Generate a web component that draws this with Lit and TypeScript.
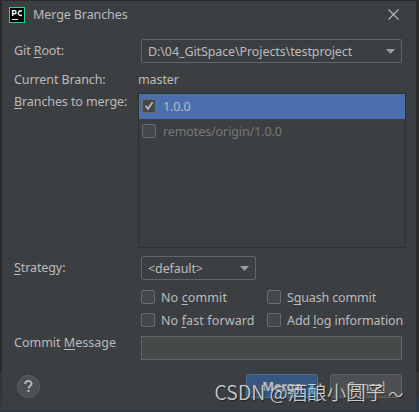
import { LitElement, html, css, svg } from "lit";
import { customElement, property } from "lit/decorators.js";
import { classMap } from "lit/directives/class-map.js";

@customElement("check-box")
class CheckBox extends LitElement {
  @property({ type: Boolean }) checked = false;

  static styles = css`
    :host { display: block; width: 14px; height: 14px; flex: none; }
    .box {
      box-sizing: border-box;
      width: 14px;
      height: 14px;
      border: 1px solid #6b6b6b;
      border-radius: 2px;
      background: #43494a;
    }
    svg { display: block; width: 12px; height: 12px; }
  `;

  render() {
    return html`<div class="box">
      ${this.checked
        ? html`<svg viewBox="0 0 12 12">${svg`<path d="M2.6 5.9 L5 8.8 L9.6 2.2" fill="none" stroke="#b0b0b0" stroke-width="2"/>`}</svg>`
        : null}
    </div>`;
  }
}

@customElement("combo-box")
class ComboBox extends LitElement {
  static styles = css`
    :host {
      display: flex;
      box-sizing: border-box;
      height: 24px;
      align-items: center;
      justify-content: space-between;
      border: 1px solid #646464;
      border-radius: 2px;
      padding: 0 6px;
      background: #3c3f41;
    }
    svg { display: block; width: 9px; height: 5px; }
  `;

  render() {
    return html`<slot></slot><svg viewBox="0 0 9 5"><path d="M0 0H9L4.5 5Z" fill="#9a9da0" /></svg>`;
  }
}

@customElement("app-root")
class AppRoot extends LitElement {
  private branches = [
    { name: "1.0.0", selected: true },
    { name: "remotes/origin/1.0.0", selected: false },
  ];

  static styles = css`
    :host {
      display: block;
      box-sizing: border-box;
      width: 419px;
      height: 412px;
      padding: 1px 3px 2px 2px;
      overflow: hidden;
      position: relative;
      background: linear-gradient(#292a2b 0 372px, #323436 372px 397px, #2d3947 397px);
      font: 12.5px/18px "Noto Sans", "Open Sans", sans-serif;
      letter-spacing: -0.1px;
      color: #bbbbbb;
      white-space: nowrap;
    }
    .dialog {
      box-sizing: border-box;
      height: 409px;
      background: #3c3f41;
      padding: 0 12px;
      display: flex;
      flex-direction: column;
    }
    .title { display: flex; height: 27px; align-items: center; margin: 0 5px 0 -5px; }
    .logo { width: 16px; height: 16px; display: block; margin: 1px 8px 0 0; }
    .title span { flex: 1; }
    .close { width: 11px; height: 11px; display: block; }
    .row { display: grid; grid-template-columns: 124px 1fr; }
    .root { margin-top: 11px; height: 24px; }
    .root combo-box, .message .field { margin: 0 2px 0 3px; }
    .root > span { padding-top: 3px; }
    .root combo-box span { padding-top: 1px; }
    .current { margin-top: 8px; height: 18px; }
    .merge { margin-top: 4px; height: 155px; }
    .list { box-sizing: border-box; border: 1px solid #2f3133; width: 268px; margin-right: -1px; }
    .branch { display: flex; align-items: center; height: 25px; padding-left: 3px; gap: 7px; color: #777777; }
    .branch check-box { margin-top: -1px; }
    .branch span { margin-top: 1px; }
    .selected { background: #4b6eaf; color: #bbbbbb; }
    .strategy { margin-top: 8px; height: 24px; }
    .strategy > span { padding-top: 3px; }
    .strategy combo-box { width: 115px; margin-left: 3px; }
    .strategy combo-box span { padding-top: 1px; }
    .options {
      margin: 8px 0 0 127px;
      display: grid;
      grid-template-columns: 126px 1fr;
      grid-auto-rows: 18px;
      row-gap: 5px;
    }
    .option { display: flex; align-items: center; gap: 6px; }
    .option span { padding-top: 1px; margin-bottom: -1px; }
    .message { margin-top: 7px; height: 24px; }
    .message > span { margin-top: -2px; letter-spacing: 0; }
    .field { box-sizing: border-box; border: 1px solid #646464; background: #45494a; height: 24px; }
    .footer { display: flex; align-items: center; margin: 14px 2px 0 3px; height: 24px; gap: 12px; }
    .help { width: 23px; height: 23px; margin-right: auto; display: block; }
    .btn {
      box-sizing: border-box;
      width: 72px;
      height: 24px;
      border: 1px solid #5e6060;
      border-radius: 3px;
      background: #4c5052;
      text-align: center;
      line-height: 23px;
    }
    .primary { background: #365880; border-color: #4c708c; font-weight: 700; }
    u { text-decoration: underline 1px; text-underline-offset: 2px; text-decoration-skip-ink: none; }
    .watermark {
      position: absolute;
      left: 214.5px;
      top: 379px;
      font: 19.5px/26px "Noto Sans CJK SC", sans-serif;
      font-weight: 350;
      letter-spacing: 0;
      color: rgba(222, 222, 222, 0.88);
      text-shadow: 1px 1px 1px rgba(20, 20, 20, 0.7);
    }
    .wave { font-size: 15px; margin-left: 3px; }
    .t-nc, .t-nf { letter-spacing: 0.12px; }
    .t-sq { letter-spacing: -0.15px; }
  `;

  render() {
    return html`
      <div class="dialog">
        <div class="title">
          <svg class="logo" viewBox="0 0 16 16">
            <rect width="16" height="16" fill="#21d789" />
            <rect x="1" y="1" width="14" height="14" fill="#000" />
            <path d="M3.6 9V3.6H5.4A1.5 1.5 0 0 1 5.4 6.8H3.6M12.8 4.4A2.2 2.2 0 1 0 12.8 7.9" fill="none" stroke="#fff" stroke-width="1.4" />
            <rect x="3" y="12" width="6" height="1" fill="#fff" />
          </svg>
          <span>Merge Branches</span>
          <svg class="close" viewBox="0 0 11 11"><path d="M.5 .5L10.5 10.5M10.5 .5L.5 10.5" stroke="#b4b5b6" stroke-width="1.1" /></svg>
        </div>
        <div class="row root">
          <span>Git <u>R</u>oot:</span>
          <combo-box><span>D:\\04_GitSpace\\Projects\\testproject</span></combo-box>
        </div>
        <div class="row current"><span>Current Branch:</span><span>master</span></div>
        <div class="row merge">
          <span><u>B</u>ranches to merge:</span>
          <div class="list">
            ${this.branches.map(
              (b) => html`<div class=${classMap({ branch: true, selected: b.selected })}>
                <check-box ?checked=${b.selected}></check-box><span>${b.name}</span>
              </div>`
            )}
          </div>
        </div>
        <div class="row strategy">
          <span><u>S</u>trategy:</span>
          <combo-box><span>&lt;default&gt;</span></combo-box>
        </div>
        <div class="options">
          <div class="option"><check-box></check-box><span class="t-nc">No <u>c</u>ommit</span></div>
          <div class="option"><check-box></check-box><span class="t-sq">S<u>q</u>uash commit</span></div>
          <div class="option"><check-box></check-box><span class="t-nf">No <u>f</u>ast forward</span></div>
          <div class="option"><check-box></check-box><span>Add <u>l</u>og information</span></div>
        </div>
        <div class="row message"><span>Commit <u>M</u>essage</span><div class="field"></div></div>
        <div class="footer">
          <svg class="help" viewBox="0 0 23 23">
            <circle cx="11.5" cy="11.5" r="11" fill="#4c5052" stroke="#5e6060" />
            <path d="M8.2 9.1C8.2 4.9 14.6 5 14.6 8.7C14.6 11 11.5 11 11.5 13.6" fill="none" stroke="#bbb" stroke-width="1.8" />
            <rect x="10.5" y="15" width="2" height="2" fill="#bbb" />
          </svg>
          <div class="btn primary">Merge</div>
          <div class="btn">Cancel</div>
        </div>
      </div>
      <div class="watermark">CSDN @酒酿小圆子<span class="wave">～</span></div>
    `;
  }
}
